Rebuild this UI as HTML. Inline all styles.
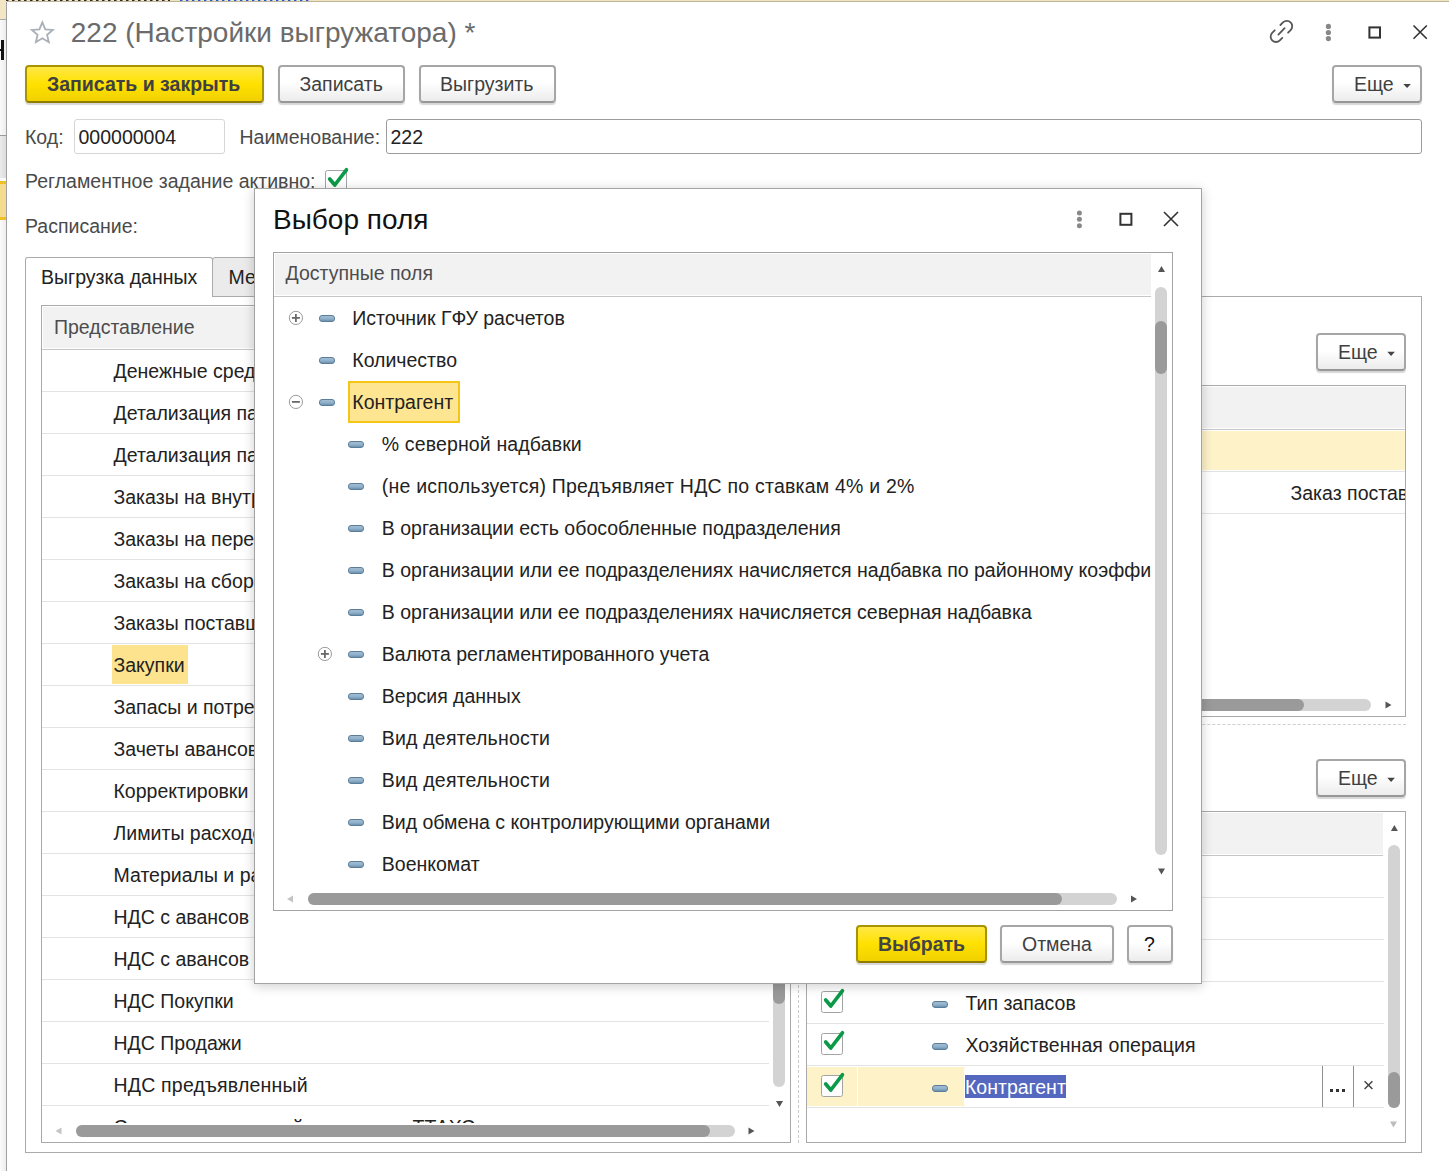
<!DOCTYPE html><html><head><meta charset="utf-8"><style>
*{margin:0;padding:0;box-sizing:border-box}
html,body{width:1449px;height:1171px;overflow:hidden;background:#fff}
body{position:relative;font-family:"Liberation Sans",sans-serif}
.t{position:absolute;white-space:pre;font-family:"Liberation Sans",sans-serif;}
.btn{position:absolute;border:2px solid #a6a6a6;border-bottom-color:#979797;border-radius:4px;background:linear-gradient(#ffffff 0%,#ffffff 45%,#ececec 100%);box-shadow:0 2px 1px rgba(0,0,0,0.16)}
.yb{border-color:#a89300;border-bottom-color:#8f7c00;background:linear-gradient(#ffe845 0%,#ffe100 50%,#f1d100 100%)}
.mi{position:absolute;width:16px;height:7px;border-radius:3px;background:linear-gradient(#a3bdd2,#8fb0cb 55%,#6d91ae);border:1px solid #5a7d9a}
.cb{position:absolute;border:1.5px solid #a3a3a3;border-radius:2.5px;background:#fff}
.ln{position:absolute}
</style></head><body><div style="position:absolute;left:0px;top:0px;width:1449px;height:2px;background:#efe3c0"></div>
<div style="position:absolute;left:7px;top:1px;width:1442px;height:1px;background:#bdb49a"></div>
<div style="position:absolute;left:0px;top:0px;width:170px;height:1px;background:repeating-linear-gradient(90deg,#2a2a2a 0 2px,#8a8070 2px 3px,#efe3c0 3px 6px)"></div>
<div style="position:absolute;left:180px;top:0px;width:132px;height:1px;background:repeating-linear-gradient(90deg,#2456c0 0 2px,#9fb0d8 2px 3px,#efe3c0 3px 6px)"></div>
<div style="position:absolute;left:0px;top:0px;width:6px;height:19px;background:#f2e6c4"></div>
<div style="position:absolute;left:0px;top:19px;width:6px;height:1px;background:#ababab"></div>
<div style="position:absolute;left:0px;top:20px;width:6px;height:115px;background:linear-gradient(90deg,#fafafa,#ececec)"></div>
<div style="position:absolute;left:1px;top:40px;width:3px;height:20px;background:#111"></div>
<div style="position:absolute;left:0px;top:49px;width:1px;height:2px;background:#111"></div>
<div style="position:absolute;left:0px;top:135px;width:6px;height:1px;background:#9a9a9a"></div>
<div style="position:absolute;left:0px;top:136px;width:6px;height:42px;background:linear-gradient(90deg,#ebebeb,#dcdcdc)"></div>
<div style="position:absolute;left:0px;top:178px;width:6px;height:3px;background:#fafafa"></div>
<div style="position:absolute;left:0px;top:181px;width:6px;height:3px;background:#f0c020"></div>
<div style="position:absolute;left:0px;top:184px;width:6px;height:33px;background:#f4dc8d"></div>
<div style="position:absolute;left:0px;top:217px;width:6px;height:3px;background:#f0c020"></div>
<div style="position:absolute;left:0px;top:220px;width:6px;height:951px;background:linear-gradient(90deg,#fbfbfb,#ededed)"></div>
<div style="position:absolute;left:6px;top:2px;width:1px;height:1169px;background:#a0a0a0"></div>
<svg style="position:absolute;left:0;top:0;overflow:visible" width="1" height="1"><polygon points="42.35,22.35 45.29,29.30 52.81,29.95 47.11,34.90 48.82,42.25 42.35,38.35 35.88,42.25 37.59,34.90 31.89,29.95 39.41,29.30" fill="none" stroke="#a9afb6" stroke-width="1.8" stroke-linejoin="miter"/></svg>
<div class="t" style="left:70.8px;top:17.0px;font-size:28px;line-height:32px;color:#6b6b6b;font-weight:400;">222 (Настройки выгружатора) *</div>
<svg style="position:absolute;left:0;top:0;overflow:visible" width="1" height="1">
<g fill="none" stroke="#575757" stroke-width="1.8" stroke-linecap="round">
<path d="M1280.4 25.0 L1282.98 22.48 A5.4 5.4 0 0 1 1290.62 30.12 L1288.1 32.7"/>
<path d="M1274.7 30.3 L1272.18 32.78 A5.4 5.4 0 0 0 1279.82 40.42 L1282.3 37.9"/>
<path d="M1278.4 34.6 L1284.6 28.2"/>
</g>
<circle cx="1328.4" cy="26.4" r="2.6" fill="#888"/>
<circle cx="1328.4" cy="32.5" r="2.6" fill="#888"/>
<circle cx="1328.4" cy="38.6" r="2.6" fill="#888"/>
<rect x="1369.4" y="27.4" width="10.6" height="10.2" fill="none" stroke="#333" stroke-width="2"/>
<path d="M1413.5 25.5 L1426.8 38.8 M1426.8 25.5 L1413.5 38.8" stroke="#333" stroke-width="1.6"/>
</svg>
<div class="btn yb" style="left:25px;top:65px;width:239px;height:38px;"></div>
<div class="t" style="left:47px;top:71.5px;font-size:19.5px;line-height:24px;color:#404040;font-weight:700;">Записать и закрыть</div>
<div class="btn" style="left:278px;top:65px;width:127px;height:38px;"></div>
<div class="t" style="left:299.5px;top:71.5px;font-size:19.5px;line-height:24px;color:#404040;font-weight:400;">Записать</div>
<div class="btn" style="left:419px;top:65px;width:137px;height:38px;"></div>
<div class="t" style="left:440px;top:71.5px;font-size:19.5px;line-height:24px;color:#404040;font-weight:400;">Выгрузить</div>
<div class="btn" style="left:1332px;top:65px;width:90px;height:38px;"></div>
<div class="t" style="left:1354px;top:71.5px;font-size:19.5px;line-height:24px;color:#404040;font-weight:400;">Еще</div>
<svg style="position:absolute;left:0;top:0;overflow:visible" width="1" height="1"><polygon points="1403.3,83.9 1410.8999999999999,83.9 1407.1,88.1" fill="#444"/></svg>
<div class="t" style="left:25px;top:124.80000000000001px;font-size:19.5px;line-height:24px;color:#4a4a4a;font-weight:400;">Код:</div>
<div style="position:absolute;left:74px;top:119px;width:151px;height:35px;border:1px solid #d6d6d6;border-radius:3px;background:#fff"></div>
<div class="t" style="left:78.5px;top:124.80000000000001px;font-size:19.5px;line-height:24px;color:#222;font-weight:400;">000000004</div>
<div class="t" style="left:239.5px;top:124.80000000000001px;font-size:19.5px;line-height:24px;color:#4a4a4a;font-weight:400;">Наименование:</div>
<div style="position:absolute;left:386px;top:119px;width:1036px;height:35px;border:1px solid #9c9c9c;border-radius:3px;background:#fff"></div>
<div class="t" style="left:390.5px;top:124.80000000000001px;font-size:19.5px;line-height:24px;color:#222;font-weight:400;">222</div>
<div class="t" style="left:25px;top:169.0px;font-size:19.5px;line-height:24px;color:#4a4a4a;font-weight:400;">Регламентное задание активно:</div>
<div class="cb" style="left:325px;top:169.5px;width:21.5px;height:21.5px"></div>
<svg style="position:absolute;left:325px;top:169.5px;overflow:visible" width="1" height="1"><path d="M4.7 9.0 L9.8 15.0 L21.4 -0.2" fill="none" stroke="#0b9a48" stroke-width="3.7" stroke-linecap="round" stroke-linejoin="round"/></svg>
<div class="t" style="left:25px;top:213.6px;font-size:19.5px;line-height:24px;color:#4a4a4a;font-weight:400;">Расписание:</div>
<div style="position:absolute;left:25px;top:296px;width:1397px;height:857px;border:1px solid #ababab;background:#fff"></div>
<div style="position:absolute;left:212px;top:257px;width:388px;height:40px;border:1px solid #ababab;border-radius:3px 3px 0 0;background:#ebebeb"></div>
<div style="position:absolute;left:25px;top:257px;width:188px;height:40px;border:1px solid #ababab;border-bottom:none;border-radius:3px 3px 0 0;background:#fff"></div>
<div class="t" style="left:41px;top:264.9px;font-size:19.5px;line-height:24px;color:#222;font-weight:400;">Выгрузка данных</div>
<div class="t" style="left:228.5px;top:264.9px;font-size:19.5px;line-height:24px;color:#222;font-weight:400;">Ме</div>
<div style="position:absolute;left:41px;top:305px;width:750px;height:838px;border:1px solid #a9a9a9;background:#fff"></div>
<div style="position:absolute;left:43px;top:307px;width:726px;height:41px;background:#f2f2f2"></div>
<div style="position:absolute;left:42px;top:349px;width:727px;height:1px;background:#c6c6c6"></div>
<div class="t" style="left:54px;top:314.6px;font-size:19.5px;line-height:24px;color:#4d4d4d;font-weight:400;">Представление</div>
<div style="position:absolute;left:42px;top:391px;width:727px;height:1px;background:#e3e3e3"></div>
<div class="t" style="left:113.5px;top:358.5px;font-size:19.5px;line-height:24px;color:#222;font-weight:400;">Денежные средства</div>
<div style="position:absolute;left:42px;top:433px;width:727px;height:1px;background:#e3e3e3"></div>
<div class="t" style="left:113.5px;top:400.5px;font-size:19.5px;line-height:24px;color:#222;font-weight:400;">Детализация партий</div>
<div style="position:absolute;left:42px;top:475px;width:727px;height:1px;background:#e3e3e3"></div>
<div class="t" style="left:113.5px;top:442.5px;font-size:19.5px;line-height:24px;color:#222;font-weight:400;">Детализация партий</div>
<div style="position:absolute;left:42px;top:517px;width:727px;height:1px;background:#e3e3e3"></div>
<div class="t" style="left:113.5px;top:484.5px;font-size:19.5px;line-height:24px;color:#222;font-weight:400;">Заказы на внутреннее потребление</div>
<div style="position:absolute;left:42px;top:559px;width:727px;height:1px;background:#e3e3e3"></div>
<div class="t" style="left:113.5px;top:526.5px;font-size:19.5px;line-height:24px;color:#222;font-weight:400;">Заказы на перемещение</div>
<div style="position:absolute;left:42px;top:601px;width:727px;height:1px;background:#e3e3e3"></div>
<div class="t" style="left:113.5px;top:568.5px;font-size:19.5px;line-height:24px;color:#222;font-weight:400;">Заказы на сборку</div>
<div style="position:absolute;left:42px;top:643px;width:727px;height:1px;background:#e3e3e3"></div>
<div class="t" style="left:113.5px;top:610.5px;font-size:19.5px;line-height:24px;color:#222;font-weight:400;">Заказы поставщикам</div>
<div style="position:absolute;left:42px;top:685px;width:727px;height:1px;background:#e3e3e3"></div>
<div style="position:absolute;left:112px;top:645px;width:76px;height:39px;background:#fde38d"></div>
<div class="t" style="left:113.5px;top:652.5px;font-size:19.5px;line-height:24px;color:#222;font-weight:400;">Закупки</div>
<div style="position:absolute;left:42px;top:727px;width:727px;height:1px;background:#e3e3e3"></div>
<div class="t" style="left:113.5px;top:694.5px;font-size:19.5px;line-height:24px;color:#222;font-weight:400;">Запасы и потребности</div>
<div style="position:absolute;left:42px;top:769px;width:727px;height:1px;background:#e3e3e3"></div>
<div class="t" style="left:113.5px;top:736.5px;font-size:19.5px;line-height:24px;color:#222;font-weight:400;">Зачеты авансов</div>
<div style="position:absolute;left:42px;top:811px;width:727px;height:1px;background:#e3e3e3"></div>
<div class="t" style="left:113.5px;top:778.5px;font-size:19.5px;line-height:24px;color:#222;font-weight:400;">Корректировки</div>
<div style="position:absolute;left:42px;top:853px;width:727px;height:1px;background:#e3e3e3"></div>
<div class="t" style="left:113.5px;top:820.5px;font-size:19.5px;line-height:24px;color:#222;font-weight:400;">Лимиты расходов</div>
<div style="position:absolute;left:42px;top:895px;width:727px;height:1px;background:#e3e3e3"></div>
<div class="t" style="left:113.5px;top:862.5px;font-size:19.5px;line-height:24px;color:#222;font-weight:400;">Материалы и работы</div>
<div style="position:absolute;left:42px;top:937px;width:727px;height:1px;background:#e3e3e3"></div>
<div class="t" style="left:113.5px;top:904.5px;font-size:19.5px;line-height:24px;color:#222;font-weight:400;">НДС с авансов</div>
<div style="position:absolute;left:42px;top:979px;width:727px;height:1px;background:#e3e3e3"></div>
<div class="t" style="left:113.5px;top:946.5px;font-size:19.5px;line-height:24px;color:#222;font-weight:400;">НДС с авансов</div>
<div style="position:absolute;left:42px;top:1021px;width:727px;height:1px;background:#e3e3e3"></div>
<div class="t" style="left:113.5px;top:988.5px;font-size:19.5px;line-height:24px;color:#222;font-weight:400;">НДС Покупки</div>
<div style="position:absolute;left:42px;top:1063px;width:727px;height:1px;background:#e3e3e3"></div>
<div class="t" style="left:113.5px;top:1030.5px;font-size:19.5px;line-height:24px;color:#222;font-weight:400;">НДС Продажи</div>
<div class="t" style="left:113.5px;top:1072.5px;font-size:19.5px;line-height:24px;color:#222;font-weight:400;letter-spacing:0.2px;">НДС предъявленный</div>
<div style="position:absolute;left:42px;top:1105px;width:727px;height:1px;background:#e3e3e3"></div>
<div style="position:absolute;left:42px;top:1106px;width:727px;height:17px;overflow:hidden"><div class="t" style="left:71.5px;top:8.5px;font-size:19.5px;line-height:24px;color:#222">Стоимость операций в разрезе</div><div class="t" style="left:370.5px;top:8.5px;font-size:19.5px;line-height:24px;color:#222">ТТАХС</div></div>
<div style="position:absolute;left:773px;top:960px;width:12px;height:127px;background:#d3d3d3;border-radius:0 0 6px 6px"></div>
<div style="position:absolute;left:773px;top:960px;width:12px;height:44px;background:#9a9a9a;border-radius:0 0 6px 6px"></div>
<svg style="position:absolute;left:0;top:0;overflow:visible" width="1" height="1"><polygon points="776.0,1101.025 783.0,1101.025 779.5,1106.975" fill="#555"/></svg>
<svg style="position:absolute;left:0;top:0;overflow:visible" width="1" height="1"><polygon points="61.475,1127.5 61.475,1134.5 55.525,1131" fill="#c4c4c4"/></svg>
<div style="position:absolute;left:76px;top:1125px;width:659px;height:12px;background:#d3d3d3;border-radius:6px"></div>
<div style="position:absolute;left:76px;top:1125px;width:634px;height:12px;background:#9a9a9a;border-radius:6px"></div>
<svg style="position:absolute;left:0;top:0;overflow:visible" width="1" height="1"><polygon points="748.525,1127.5 748.525,1134.5 754.475,1131" fill="#555"/></svg>
<div style="position:absolute;left:798px;top:305px;width:1px;height:838px;border-left:1px dashed #c8c8c8"></div>
<div class="btn" style="left:1316px;top:333px;width:90px;height:38px;"></div>
<div class="t" style="left:1338px;top:339.5px;font-size:19.5px;line-height:24px;color:#404040;font-weight:400;">Еще</div>
<svg style="position:absolute;left:0;top:0;overflow:visible" width="1" height="1"><polygon points="1387.3,351.7 1394.8999999999999,351.7 1391.1,355.90000000000003" fill="#444"/></svg>
<div style="position:absolute;left:806px;top:385px;width:600px;height:332px;border:1px solid #a9a9a9;background:#fff"></div>
<div style="position:absolute;left:808px;top:387px;width:597px;height:41px;background:#f2f2f2"></div>
<div style="position:absolute;left:807px;top:429px;width:598px;height:1px;background:#c6c6c6"></div>
<div style="position:absolute;left:807px;top:431px;width:598px;height:39px;background:#fdf2c8"></div>
<div style="position:absolute;left:807px;top:471px;width:598px;height:1px;background:#e3e3e3"></div>
<div style="position:absolute;left:807px;top:513px;width:598px;height:1px;background:#e3e3e3"></div>
<div class="t" style="left:1290.5px;top:480.7px;font-size:19.5px;line-height:24px;color:#222;font-weight:400;clip-path:inset(0 0 0 0);">Заказ поставщику</div>
<div style="position:absolute;left:1405px;top:470px;width:44px;height:44px;background:#fff"></div>
<div style="position:absolute;left:1405px;top:385px;width:1px;height:332px;background:#a9a9a9"></div>
<div style="position:absolute;left:1406px;top:297px;width:15px;height:855px;background:#fff"></div>
<div style="position:absolute;left:1421px;top:296px;width:1px;height:857px;background:#ababab"></div>
<div style="position:absolute;left:820px;top:699px;width:551px;height:12px;background:#d3d3d3;border-radius:6px"></div>
<div style="position:absolute;left:820px;top:699px;width:484px;height:12px;background:#9a9a9a;border-radius:6px"></div>
<svg style="position:absolute;left:0;top:0;overflow:visible" width="1" height="1"><polygon points="1385.525,701.5 1385.525,708.5 1391.475,705" fill="#555"/></svg>
<div style="position:absolute;left:806px;top:724px;width:600px;height:1px;border-top:1px dashed #cfcfcf"></div>
<div class="btn" style="left:1316px;top:759px;width:90px;height:38px;"></div>
<div class="t" style="left:1338px;top:765.5px;font-size:19.5px;line-height:24px;color:#404040;font-weight:400;">Еще</div>
<svg style="position:absolute;left:0;top:0;overflow:visible" width="1" height="1"><polygon points="1387.3,777.8 1394.8999999999999,777.8 1391.1,782.0" fill="#444"/></svg>
<div style="position:absolute;left:806px;top:811px;width:600px;height:332px;border:1px solid #a9a9a9;background:#fff"></div>
<div style="position:absolute;left:808px;top:813px;width:575px;height:41px;background:#f2f2f2"></div>
<div style="position:absolute;left:807px;top:855px;width:576px;height:1px;background:#c6c6c6"></div>
<div style="position:absolute;left:807px;top:897px;width:577px;height:1px;background:#e3e3e3"></div>
<div style="position:absolute;left:807px;top:939px;width:577px;height:1px;background:#e3e3e3"></div>
<div style="position:absolute;left:807px;top:981px;width:577px;height:1px;background:#e3e3e3"></div>
<div style="position:absolute;left:807px;top:1023px;width:577px;height:1px;background:#e3e3e3"></div>
<div style="position:absolute;left:807px;top:1065px;width:577px;height:1px;background:#e3e3e3"></div>
<div style="position:absolute;left:807px;top:1107px;width:577px;height:1px;background:#e3e3e3"></div>
<svg style="position:absolute;left:0;top:0;overflow:visible" width="1" height="1"><polygon points="1390.9,830.975 1397.9,830.975 1394.4,825.025" fill="#555"/></svg>
<div style="position:absolute;left:1388px;top:845px;width:12px;height:263px;background:#d3d3d3;border-radius:6px"></div>
<div style="position:absolute;left:1388px;top:1072px;width:12px;height:36px;background:#9a9a9a;border-radius:6px"></div>
<svg style="position:absolute;left:0;top:0;overflow:visible" width="1" height="1"><polygon points="1390.0,1121.525 1397.0,1121.525 1393.5,1127.475" fill="#bdbdbd"/></svg>
<div style="position:absolute;left:807px;top:1067px;width:577px;height:39px;background:#fdf2c8"></div>
<div style="position:absolute;left:857px;top:1067px;width:1px;height:39px;background:#fff"></div>
<div class="cb" style="left:821.2px;top:991.0px;width:21.5px;height:21.5px"></div>
<svg style="position:absolute;left:821.2px;top:991.0px;overflow:visible" width="1" height="1"><path d="M4.7 9.0 L9.8 15.0 L21.4 -0.2" fill="none" stroke="#0b9a48" stroke-width="3.7" stroke-linecap="round" stroke-linejoin="round"/></svg>
<div class="mi" style="left:932px;top:1000.5px"></div>
<div class="t" style="left:965.5px;top:990.5px;font-size:19.5px;line-height:24px;color:#222;font-weight:400;">Тип запасов</div>
<div class="cb" style="left:821.2px;top:1033.0px;width:21.5px;height:21.5px"></div>
<svg style="position:absolute;left:821.2px;top:1033.0px;overflow:visible" width="1" height="1"><path d="M4.7 9.0 L9.8 15.0 L21.4 -0.2" fill="none" stroke="#0b9a48" stroke-width="3.7" stroke-linecap="round" stroke-linejoin="round"/></svg>
<div class="mi" style="left:932px;top:1042.5px"></div>
<div class="t" style="left:965.5px;top:1032.5px;font-size:19.5px;line-height:24px;color:#222;font-weight:400;letter-spacing:0.08px;">Хозяйственная операция</div>
<div class="cb" style="left:821.2px;top:1075.0px;width:21.5px;height:21.5px"></div>
<svg style="position:absolute;left:821.2px;top:1075.0px;overflow:visible" width="1" height="1"><path d="M4.7 9.0 L9.8 15.0 L21.4 -0.2" fill="none" stroke="#0b9a48" stroke-width="3.7" stroke-linecap="round" stroke-linejoin="round"/></svg>
<div class="mi" style="left:932px;top:1084.5px"></div>
<div style="position:absolute;left:964px;top:1066px;width:420px;height:41px;background:#fff;border-radius:4px 0 0 4px"></div>
<div style="position:absolute;left:965px;top:1075px;width:101px;height:23px;background:#5468c0"></div>
<div class="t" style="left:965px;top:1074.5px;font-size:19.5px;line-height:24px;color:#fff;font-weight:400;">Контрагент</div>
<div style="position:absolute;left:1322px;top:1066px;width:1px;height:41px;background:#8f8f8f"></div>
<div style="position:absolute;left:1353px;top:1066px;width:1px;height:41px;background:#8f8f8f"></div>
<div style="position:absolute;left:1330px;top:1089px;width:3px;height:3px;background:#333"></div>
<div style="position:absolute;left:1336px;top:1089px;width:3px;height:3px;background:#333"></div>
<div style="position:absolute;left:1342px;top:1089px;width:3px;height:3px;background:#333"></div>
<svg style="position:absolute;left:0;top:0;overflow:visible" width="1" height="1"><path d="M1364.6 1081.3 L1372.4 1089 M1372.4 1081.3 L1364.6 1089" stroke="#444" stroke-width="1.5"/></svg>
<div style="position:absolute;left:254px;top:188px;width:948px;height:796px;border:1px solid #a3a3a3;background:#fff;box-shadow:0 2px 11px rgba(0,0,0,0.2)"></div>
<div class="t" style="left:273px;top:203.7px;font-size:28px;line-height:32px;color:#111;font-weight:400;">Выбор поля</div>
<svg style="position:absolute;left:0;top:0;overflow:visible" width="1" height="1">
<circle cx="1079.4" cy="212.9" r="2.5" fill="#888"/>
<circle cx="1079.4" cy="219.3" r="2.5" fill="#888"/>
<circle cx="1079.4" cy="225.7" r="2.5" fill="#888"/>
<rect x="1120.4" y="213.8" width="11" height="11" fill="none" stroke="#333" stroke-width="2"/>
<path d="M1164 212 L1178 226 M1178 212 L1164 226" stroke="#333" stroke-width="1.6"/>
</svg>
<div style="position:absolute;left:273px;top:252px;width:900px;height:659px;border:1px solid #a3a3a3;background:#fff"></div>
<div style="position:absolute;left:275px;top:254px;width:876px;height:41px;background:#f2f2f2"></div>
<div style="position:absolute;left:274px;top:296px;width:877px;height:1px;background:#c6c6c6"></div>
<div class="t" style="left:285.5px;top:261.0px;font-size:19.5px;line-height:24px;color:#4d4d4d;font-weight:400;">Доступные поля</div>
<div style="position:absolute;left:274px;top:297px;width:877px;height:592px;overflow:hidden">
<svg style="position:absolute;left:0;top:0;overflow:visible" width="1" height="1"><circle cx="21.899999999999977" cy="20.900000000000023" r="6.6" fill="none" stroke="#9a9a9a" stroke-width="1"/><line x1="17.899999999999977" y1="20.900000000000023" x2="25.899999999999977" y2="20.900000000000023" stroke="#6a6a6a" stroke-width="1.8"/><line x1="21.899999999999977" y1="16.900000000000023" x2="21.899999999999977" y2="24.900000000000023" stroke="#6a6a6a" stroke-width="1.8"/></svg>
<div class="mi" style="left:45px;top:18.400000000000023px"></div>
<div class="t" style="left:78.30000000000001px;top:8.600000000000023px;font-size:19.5px;line-height:24px;color:#222;letter-spacing:0px">Источник ГФУ расчетов</div>
<div class="mi" style="left:45px;top:60.40000000000002px"></div>
<div class="t" style="left:78.30000000000001px;top:50.60000000000002px;font-size:19.5px;line-height:24px;color:#222;letter-spacing:0px">Количество</div>
<svg style="position:absolute;left:0;top:0;overflow:visible" width="1" height="1"><circle cx="21.899999999999977" cy="104.90000000000002" r="6.6" fill="none" stroke="#9a9a9a" stroke-width="1"/><line x1="17.899999999999977" y1="104.90000000000002" x2="25.899999999999977" y2="104.90000000000002" stroke="#6a6a6a" stroke-width="1.8"/></svg>
<div class="mi" style="left:45px;top:102.40000000000002px"></div>
<div style="position:absolute;left:74px;top:84px;width:112px;height:42px;background:#fee591;border:2px solid #f5c518"></div>
<div class="t" style="left:78.30000000000001px;top:92.60000000000002px;font-size:19.5px;line-height:24px;color:#222;letter-spacing:0px">Контрагент</div>
<div class="mi" style="left:74px;top:144.40000000000003px"></div>
<div class="t" style="left:107.80000000000001px;top:134.60000000000002px;font-size:19.5px;line-height:24px;color:#222;letter-spacing:0.14px">% северной надбавки</div>
<div class="mi" style="left:74px;top:186.40000000000003px"></div>
<div class="t" style="left:107.80000000000001px;top:176.60000000000002px;font-size:19.5px;line-height:24px;color:#222;letter-spacing:0.22px">(не используется) Предъявляет НДС по ставкам 4% и 2%</div>
<div class="mi" style="left:74px;top:228.40000000000003px"></div>
<div class="t" style="left:107.80000000000001px;top:218.60000000000002px;font-size:19.5px;line-height:24px;color:#222;letter-spacing:0px">В организации есть обособленные подразделения</div>
<div class="mi" style="left:74px;top:270.40000000000003px"></div>
<div class="t" style="left:107.80000000000001px;top:260.6px;font-size:19.5px;line-height:24px;color:#222;letter-spacing:0px">В организации или ее подразделениях начисляется надбавка по районному коэффициенту</div>
<div class="mi" style="left:74px;top:312.40000000000003px"></div>
<div class="t" style="left:107.80000000000001px;top:302.6px;font-size:19.5px;line-height:24px;color:#222;letter-spacing:0px">В организации или ее подразделениях начисляется северная надбавка</div>
<svg style="position:absolute;left:0;top:0;overflow:visible" width="1" height="1"><circle cx="50.89999999999998" cy="356.90000000000003" r="6.6" fill="none" stroke="#9a9a9a" stroke-width="1"/><line x1="46.89999999999998" y1="356.90000000000003" x2="54.89999999999998" y2="356.90000000000003" stroke="#6a6a6a" stroke-width="1.8"/><line x1="50.89999999999998" y1="352.90000000000003" x2="50.89999999999998" y2="360.90000000000003" stroke="#6a6a6a" stroke-width="1.8"/></svg>
<div class="mi" style="left:74px;top:354.40000000000003px"></div>
<div class="t" style="left:107.80000000000001px;top:344.6px;font-size:19.5px;line-height:24px;color:#222;letter-spacing:0px">Валюта регламентированного учета</div>
<div class="mi" style="left:74px;top:396.40000000000003px"></div>
<div class="t" style="left:107.80000000000001px;top:386.6px;font-size:19.5px;line-height:24px;color:#222;letter-spacing:0px">Версия данных</div>
<div class="mi" style="left:74px;top:438.40000000000003px"></div>
<div class="t" style="left:107.80000000000001px;top:428.6px;font-size:19.5px;line-height:24px;color:#222;letter-spacing:0.2px">Вид деятельности</div>
<div class="mi" style="left:74px;top:480.40000000000003px"></div>
<div class="t" style="left:107.80000000000001px;top:470.6px;font-size:19.5px;line-height:24px;color:#222;letter-spacing:0.2px">Вид деятельности</div>
<div class="mi" style="left:74px;top:522.4px"></div>
<div class="t" style="left:107.80000000000001px;top:512.6px;font-size:19.5px;line-height:24px;color:#222;letter-spacing:0px">Вид обмена с контролирующими органами</div>
<div class="mi" style="left:74px;top:564.4px"></div>
<div class="t" style="left:107.80000000000001px;top:554.6px;font-size:19.5px;line-height:24px;color:#222;letter-spacing:0px">Военкомат</div>
</div>
<svg style="position:absolute;left:0;top:0;overflow:visible" width="1" height="1"><polygon points="1158.0,271.975 1165.0,271.975 1161.5,266.025" fill="#555"/></svg>
<div style="position:absolute;left:1155px;top:287px;width:12px;height:568px;background:#d3d3d3;border-radius:6px"></div>
<div style="position:absolute;left:1155px;top:321px;width:12px;height:53px;background:#9a9a9a;border-radius:6px"></div>
<svg style="position:absolute;left:0;top:0;overflow:visible" width="1" height="1"><polygon points="1158.0,868.525 1165.0,868.525 1161.5,874.475" fill="#555"/></svg>
<svg style="position:absolute;left:0;top:0;overflow:visible" width="1" height="1"><polygon points="292.975,895.5 292.975,902.5 287.025,899" fill="#c4c4c4"/></svg>
<div style="position:absolute;left:308px;top:893px;width:809px;height:12px;background:#d3d3d3;border-radius:6px"></div>
<div style="position:absolute;left:308px;top:893px;width:754px;height:12px;background:#9a9a9a;border-radius:6px"></div>
<svg style="position:absolute;left:0;top:0;overflow:visible" width="1" height="1"><polygon points="1131.025,895.5 1131.025,902.5 1136.975,899" fill="#555"/></svg>
<div class="btn yb" style="left:856px;top:925px;width:131px;height:38px;"></div>
<div class="t" style="left:878px;top:932.0px;font-size:19.5px;line-height:24px;color:#444;font-weight:700;">Выбрать</div>
<div class="btn" style="left:1000px;top:925px;width:114px;height:38px;"></div>
<div class="t" style="left:1022px;top:932.0px;font-size:19.5px;line-height:24px;color:#404040;font-weight:400;">Отмена</div>
<div class="btn" style="left:1127px;top:925px;width:46px;height:38px;"></div>
<div class="t" style="left:1144px;top:932.0px;font-size:19.5px;line-height:24px;color:#111;font-weight:400;">?</div></body></html>
